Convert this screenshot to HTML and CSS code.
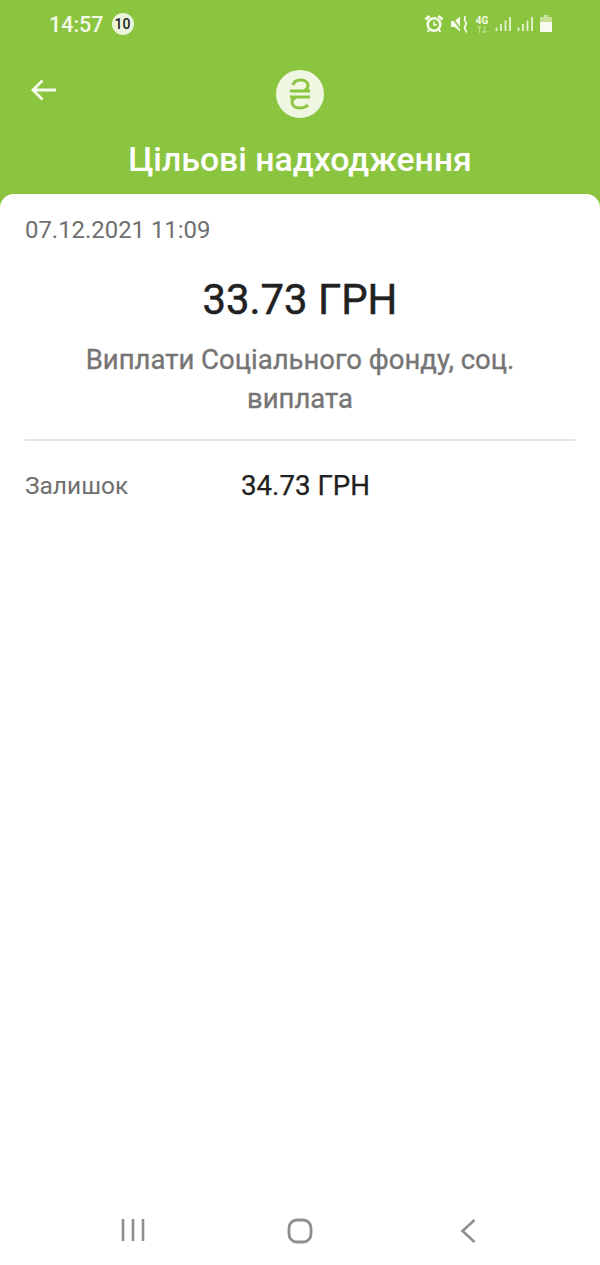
FILE: index.html
```html
<!DOCTYPE html>
<html lang="uk">
<head>
<meta charset="utf-8">
<title>Цільові надходження</title>
<link rel="stylesheet" href="styles.css">
</head>
<body>
<div class="screen">
  <header class="top">
    <div class="status">
      <div class="status-left">
        <span class="clock">14:57</span>
        <span class="badge">10</span>
      </div>
      <div class="status-right">
        <svg width="20" height="20" viewBox="0 0 20 20"><circle cx="10" cy="10.500" r="6.300" fill="none" stroke="#f6fbee" stroke-width="2.600"/><path d="M10 7.500V11h3" fill="none" stroke="#f6fbee" stroke-width="1.500"/><path d="M1.500 5.500 5.500 2M18.500 5.500 14.500 2" stroke="#f6fbee" stroke-width="2.800"/><path d="M5.500 15.500l-2 2.500M14.500 15.500l2 2.500" stroke="#f6fbee" stroke-width="2"/></svg>
        <svg width="19" height="20" viewBox="0 0 19 20"><path d="M1 7h3.500L10 2.500v15L4.500 13H1z" fill="#f6fbee"/><path d="M1 2l11 15" stroke="#8bc53f" stroke-width="1.400"/><path d="M14.500 2c2.500 2-1.500 3 .5 5 2 2 1.500 3 .5 4.500s-1.500 3 0 4.500 1 2 .5 2.500" fill="none" stroke="#f6fbee" stroke-width="1.700"/></svg>
        <span class="net">4G<svg width="12" height="7" viewBox="0 0 12 7"><path d="M3.500 0v7M1.500 2l2-2 2 2M8.500 7V0M6.500 5l2 2 2-2" fill="none" stroke="#bcdc88" stroke-width="1.100"/></svg></span>
        <svg width="16" height="16" viewBox="0 0 16 16"><path d="M1.500 11.500v3.500M6 8v7M10.500 4.500V15M15 1v14" stroke="#e6f2d2" stroke-width="1.800"/></svg>
        <svg width="16" height="16" viewBox="0 0 16 16"><path d="M1.500 11.500v3.500M6 8v7M10.500 4.500V15M15 1v14" stroke="#e6f2d2" stroke-width="1.800"/></svg>
        <svg width="14" height="18" viewBox="0 0 14 18"><path d="M4.500 0h5v2h-5z" fill="#c9e39c"/><path d="M1 2h12v5H1z" fill="#c4e090"/><path d="M1 7h12v10H1z" fill="#f6fbee"/></svg>
      </div>
    </div>
    <div class="nav">
      <svg class="back" width="28" height="24" viewBox="0 0 28 24"><path d="M26 12H3M12.500 2.500 3 12l9.500 9.500" fill="none" stroke="#f6fbee" stroke-width="2.800"/></svg>
      <span class="logo">
        <svg width="24" height="32" viewBox="0 0 24 32"><path d="M5 7C6 3.500 9 2 12.500 2c5 0 7.500 2.500 7.500 5.500 0 3-1.500 4.500-4.500 5.500M8.500 19C5.500 20 4 21.500 4 24c0 3.500 3 6 7.500 6 4 0 6.500-1 8.500-3M2 13h20M2 19h20" fill="none" stroke="#8bc53f" stroke-width="3"/></svg>
      </span>
    </div>
    <h1 class="title">Цільові надходження</h1>
  </header>

  <main class="card">
    <div class="date">07.12.2021 11:09</div>
    <div class="amount">33.73 ГРН</div>
    <div class="desc">Виплати Соціального фонду, соц. виплата</div>
    <div class="row">
      <span class="row-label">Залишок</span>
      <span class="row-value">34.73 ГРН</span>
    </div>
  </main>

  <footer class="softkeys">
    <svg width="26" height="24" viewBox="0 0 26 24"><path d="M3 1v22M13 1v22M23 1v22" stroke="#8e8e8e" stroke-width="2.600"/></svg>
    <svg width="26" height="26" viewBox="0 0 26 26"><rect x="2" y="2" width="22" height="22" rx="8" fill="none" stroke="#8e8e8e" stroke-width="2.800"/></svg>
    <svg width="18" height="26" viewBox="0 0 18 26"><path d="M16.500 2 4.500 13l12 11" fill="none" stroke="#8e8e8e" stroke-width="2.600"/></svg>
  </footer>
</div>
</body>
</html>
```
FILE: styles.css
```css
* {
  box-sizing: border-box;
}

html,
body {
  margin: 0;
  padding: 0;
}

body {
  background: #fff;
  font-family: Roboto, "Noto Sans", sans-serif;
}

.screen {
  width: 600px;
  height: 1265px;
  display: flex;
  flex-direction: column;
  background: #8bc53f;
  overflow: hidden;
}

.top {
  height: 194px;
  flex: none;
}

.status {
  height: 48px;
  padding: 0 47px 0 49px;
  display: flex;
  align-items: center;
  justify-content: space-between;
}

.status-left {
  display: flex;
  align-items: center;
  gap: 8px;
}

.clock {
  color: #f4f9ea;
  font-size: 21.500px;
  font-weight: 500;
}

.badge {
  width: 22px;
  height: 22px;
  border-radius: 50%;
  background: #eaf4da;
  color: #222;
  font-size: 14px;
  font-weight: 500;
  display: flex;
  align-items: center;
  justify-content: center;
}

.status-right {
  display: flex;
  align-items: center;
  gap: 6px;
}

.net {
  width: 14px;
  display: flex;
  flex-direction: column;
  align-items: center;
  color: #f3f9e8;
  font-size: 10px;
  line-height: 10px;
  font-weight: 700;
}

.nav {
  height: 72px;
  padding-left: 30px;
  display: flex;
  align-items: center;
  position: relative;
}

.back {
  margin-top: 12px;
}

.logo {
  position: absolute;
  left: 276px;
  top: 22px;
  width: 48px;
  height: 48px;
  border-radius: 50%;
  background: #eff7e3;
  display: flex;
  align-items: center;
  justify-content: center;
}

.title {
  margin: 18px 0 0;
  color: #fff;
  font-size: 33.800px;
  line-height: 44px;
  font-weight: 500;
  text-align: center;
}

.card {
  flex: 1;
  background: #fff;
  border-radius: 14px 14px 0 0;
  padding: 20px 25px 0;
}

.date {
  color: #6f6f6f;
  font-size: 23.900px;
  line-height: 32px;
}

.amount {
  margin-top: 24px;
  color: #212121;
  font-size: 41.800px;
  line-height: 60px;
  text-align: center;
  -webkit-text-stroke: 0.5px #212121;
}

.desc {
  margin-top: 10px;
  padding: 0 20px;
  color: #757575;
  font-size: 27.500px;
  line-height: 39px;
  text-align: center;
  -webkit-text-stroke: 0.35px #757575;
}

.row {
  margin-top: 21px;
  padding-top: 24px;
  border-top: 2px solid #e3e3e6;
  display: flex;
  align-items: center;
}

.row-label {
  width: 216px;
  color: #6f6f6f;
  font-size: 24.500px;
  line-height: 42px;
}

.row-value {
  color: #212121;
  font-size: 27.700px;
  line-height: 42px;
  -webkit-text-stroke: 0.25px #212121;
}

.softkeys {
  height: 70px;
  flex: none;
  background: #fff;
  padding-top: 23px;
  display: grid;
  grid-template-columns: repeat(3, 167px);
  justify-content: center;
  justify-items: center;
  align-items: start;
}
```
